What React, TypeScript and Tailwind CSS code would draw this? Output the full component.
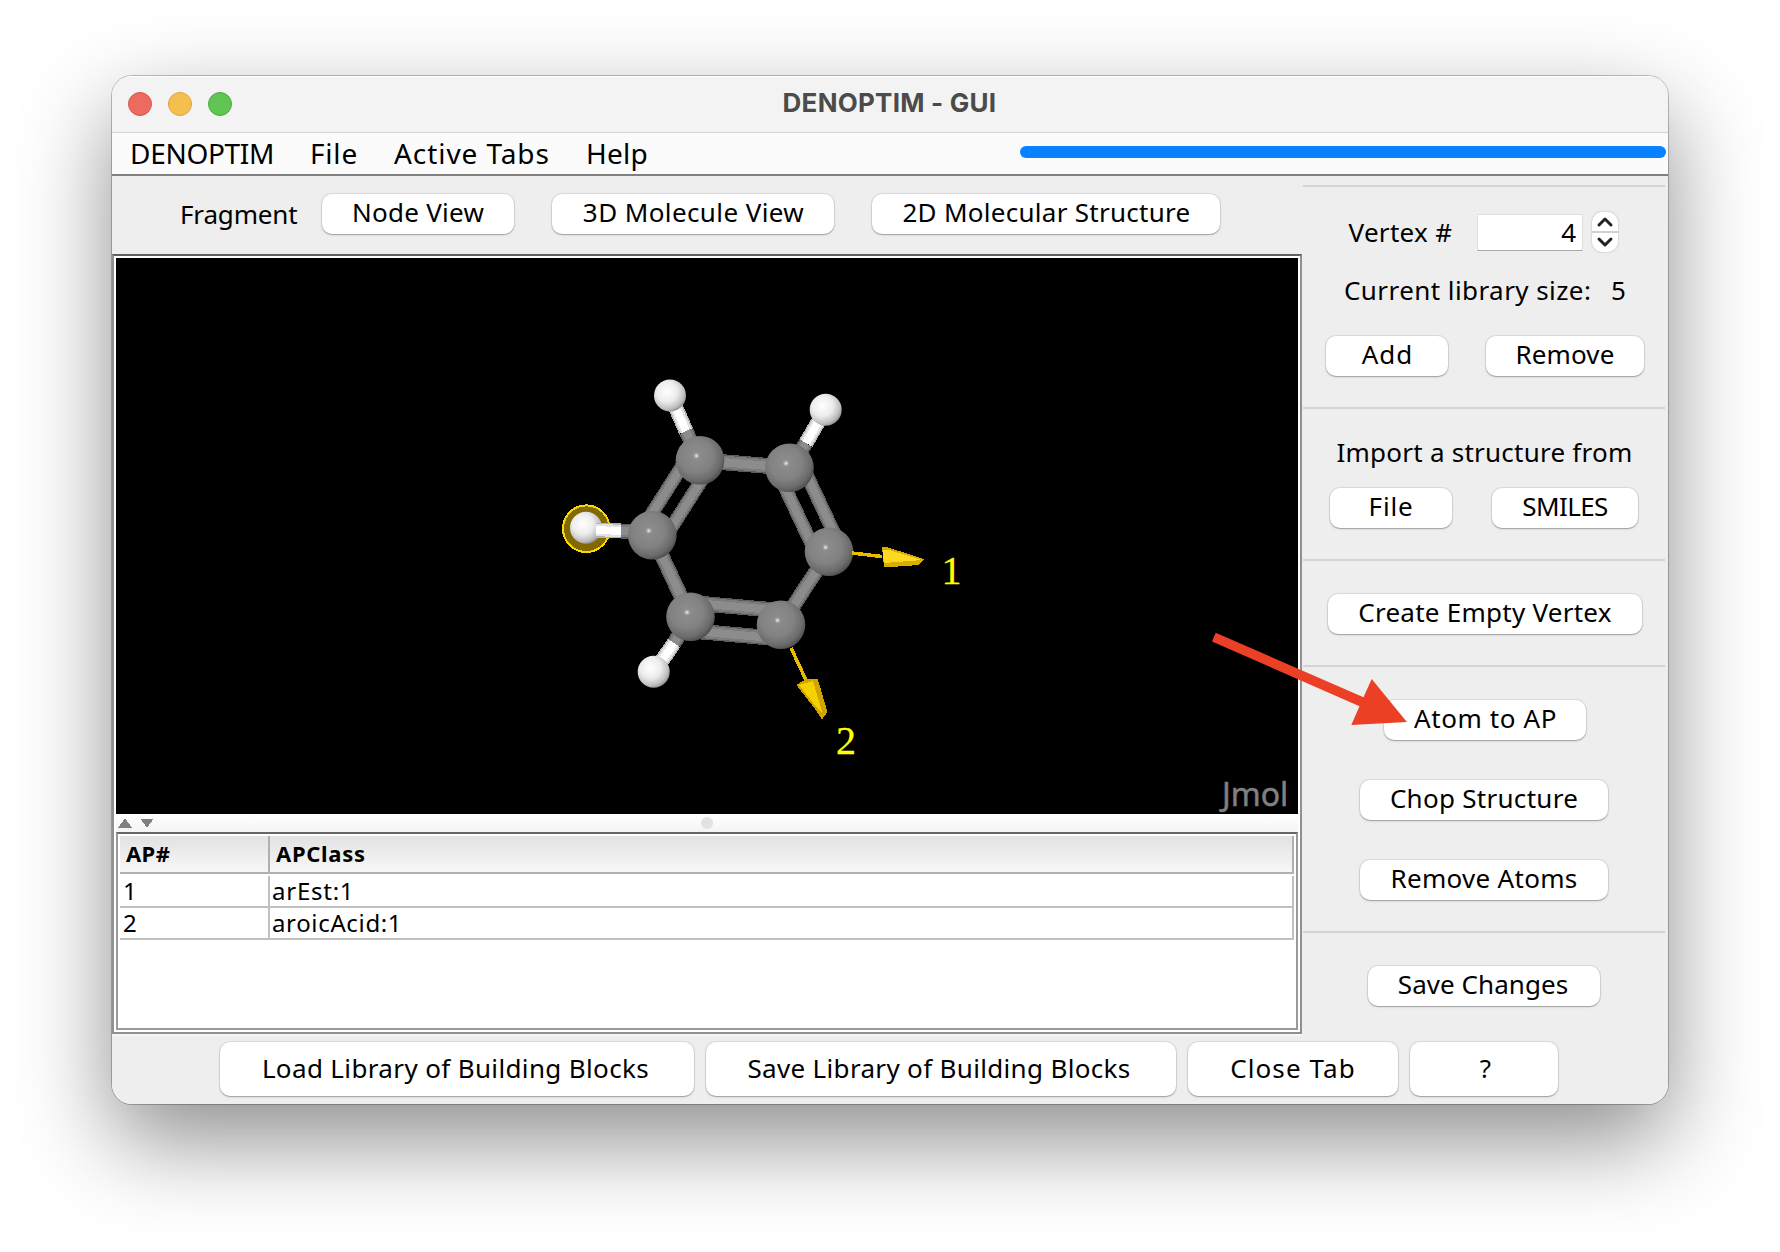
import React from 'react';

type ButtonProps = { label: string; className: string };

function Button({ label, className }: ButtonProps) {
  return (
    <button
      className={`flex shrink-0 items-center justify-center rounded-[10px] bg-white whitespace-nowrap shadow-[0_0_0_1px_rgba(0,0,0,0.07),0_1px_1px_rgba(0,0,0,0.2),0_1px_3px_rgba(0,0,0,0.1)] ${className}`}
    >
      {label}
    </button>
  );
}

function Separator() {
  return <div className="mr-[3px] ml-px h-0.5 shrink-0 bg-[#d4d4d4]" />;
}

type Point = [number, number];

const carbons: Point[] = [
  [700, 460.3],
  [789.5, 467.7],
  [829, 551.7],
  [781, 624.7],
  [690.5, 616.7],
  [652.3, 535.3],
];

const greyTones = ['#5c5c5c', '#7c7c7c', '#8c8c8c'];
const whiteTones = ['#b4b4b4', '#e2e2e2', '#ffffff'];

function Rod({ from, to, width, tones }: { from: Point; to: Point; width: number; tones: string[] }) {
  return (
    <g shapeRendering="crispEdges">
      {[1, 0.82, 0.52].map((k, i) => (
        <line key={i} x1={from[0]} y1={from[1]} x2={to[0]} y2={to[1]} stroke={tones[i]} strokeWidth={width * k} />
      ))}
    </g>
  );
}

function DoubleRod({ from, to, gap, width }: { from: Point; to: Point; gap: number; width: number }) {
  const dx = to[0] - from[0];
  const dy = to[1] - from[1];
  const n = Math.hypot(dx, dy);
  const ox = (-dy / n) * gap;
  const oy = (dx / n) * gap;
  return (
    <>
      <Rod from={[from[0] + ox, from[1] + oy]} to={[to[0] + ox, to[1] + oy]} width={width} tones={greyTones} />
      <Rod from={[from[0] - ox, from[1] - oy]} to={[to[0] - ox, to[1] - oy]} width={width} tones={greyTones} />
    </>
  );
}

function HydrogenBond({ carbon, mid, hydrogen }: { carbon: Point; mid: Point; hydrogen: Point }) {
  return (
    <>
      <Rod from={carbon} to={mid} width={15} tones={greyTones} />
      <Rod from={mid} to={hydrogen} width={15} tones={whiteTones} />
    </>
  );
}

function Hydrogen({ at, r = 16 }: { at: Point; r?: number }) {
  return <circle cx={at[0]} cy={at[1]} r={r} fill="url(#hydrogen)" />;
}

function Molecule() {
  const [c1, c2, c3, c4, c5, c6] = carbons;
  return (
    <svg viewBox="116 258 1182 556" className="block h-[556px] w-[1182px] shrink-0 bg-black">
      <defs>
        <radialGradient id="carbon" cx="0.42" cy="0.4" r="0.62">
          <stop offset="0" stopColor="#8e8e8e" />
          <stop offset="0.55" stopColor="#828282" />
          <stop offset="0.85" stopColor="#6a6a6a" />
          <stop offset="1" stopColor="#4e4e4e" />
        </radialGradient>
        <radialGradient id="hydrogen" cx="0.4" cy="0.38" r="0.65">
          <stop offset="0" stopColor="#ffffff" />
          <stop offset="0.5" stopColor="#ececec" />
          <stop offset="0.85" stopColor="#bdbdbd" />
          <stop offset="1" stopColor="#8e8e8e" />
        </radialGradient>
      </defs>

      <circle cx="586.3" cy="528.7" r="23.3" fill="#806a00" stroke="#ffd700" strokeWidth="2" shapeRendering="crispEdges" />

      <HydrogenBond carbon={c1} mid={[686, 431]} hydrogen={[672, 399]} />
      <HydrogenBond carbon={c2} mid={[806, 443]} hydrogen={[824, 412]} />
      <HydrogenBond carbon={c5} mid={[674, 643]} hydrogen={[657, 668]} />
      <Hydrogen at={[670, 395.5]} />
      <Hydrogen at={[825.7, 409.7]} />
      <Hydrogen at={[653.7, 671.7]} />

      <Rod from={c1} to={c2} width={16} tones={greyTones} />
      <Rod from={c6} to={c5} width={15} tones={greyTones} />
      <Rod from={c3} to={c4} width={15} tones={greyTones} />
      <DoubleRod from={c1} to={c6} gap={12} width={14} />
      <DoubleRod from={c2} to={c3} gap={12.5} width={14} />
      <DoubleRod from={c5} to={c4} gap={14} width={15.5} />

      <Hydrogen at={[586, 527.7]} />
      <HydrogenBond carbon={[651.7, 532.5]} mid={[621, 531]} hydrogen={[596, 530]} />

      {carbons.map(([x, y]) => (
        <g key={x}>
          <circle cx={x} cy={y} r="24.3" fill="url(#carbon)" />
          <circle cx={x - 3.5} cy={y - 4.5} r="3" fill="#a0a0a0" />
          <circle cx={x - 3.5} cy={y - 4.5} r="1.5" fill="#d8d8d8" />
        </g>
      ))}

      <g shapeRendering="crispEdges">
        <line x1="852" y1="553" x2="882" y2="556.5" stroke="#e6bb00" strokeWidth="3.5" />
        <polygon points="882,546.5 888,547.5 924,559 919,565 884,567.5" fill="#d8ae00" />
        <polygon points="882.5,550 889,550 922,560 884,563" fill="#ffd920" />
        <line x1="791" y1="648" x2="806" y2="680" stroke="#e6bb00" strokeWidth="3.5" />
        <polygon points="796.5,685 806,679 817.7,679 827.5,712 822,719.5 815,709" fill="#cfa600" />
        <polygon points="799,685 813,681 822,712 817,708" fill="#f7d000" />
      </g>

      <g className="font-['Liberation_Serif']" fontSize="40" fill="#ffff00" stroke="#ffff00" strokeWidth="0.3">
        <text x="941.5" y="583.7">1</text>
        <text x="836" y="753.5">2</text>
      </g>
      <text x="1222" y="805.5" fontSize="32" fill="#808080" stroke="#808080" strokeWidth="0.5" className="font-['Noto_Sans']">
        Jmol
      </text>
    </svg>
  );
}

function Divider() {
  return (
    <div className="flex h-[18px] shrink-0 items-center bg-gradient-to-b from-white to-[#f4f4f4] pl-0.5">
      <svg viewBox="0 0 36 10" className="h-2.5 w-9 fill-[#808080]" shapeRendering="crispEdges">
        <path d="M7 0.5 L14 9.5 H0 Z M22 0.5 H36 L29 9.5 Z" />
      </svg>
      <div className="ml-[547px] size-3 rounded-full bg-[#e2e2e2]" />
    </div>
  );
}

function Table() {
  return (
    <div className="flex h-[198px] flex-col border-2 border-t-[#666] border-r-[#999] border-b-[#999] border-l-[#999] bg-white px-0.5 pt-0.5">
      <div className="flex h-[38px] w-[1174px] shrink-0 border-r-2 border-b-2 border-[#b0b0b0] bg-gradient-to-b from-[#e2e2e2] to-[#f7f7f7] text-[22px] leading-[34px] font-bold">
        <div className="w-[150px] border-r-2 border-[#b0b0b0] pl-1.5 tracking-[0.4px]">AP#</div>
        <div className="pl-1.5 tracking-[0.7px]">APClass</div>
      </div>
      <div className="w-[1174px] text-2xl">
        <div className="flex h-[34px] border-b-2 border-[#c0c0c0] pt-0.5 leading-[29px]">
          <div className="w-[150px] border-r-2 border-[#c0c0c0] pl-[3px]">1</div>
          <div className="flex-1 border-r-2 border-[#c0c0c0] pl-0.5 tracking-[0.75px]">arEst:1</div>
        </div>
        <div className="flex h-8 border-b-2 border-[#c0c0c0] leading-[30px]">
          <div className="w-[150px] border-r-2 border-[#c0c0c0] pl-[3px]">2</div>
          <div className="flex-1 border-r-2 border-[#c0c0c0] pl-0.5 tracking-[0.65px]">aroicAcid:1</div>
        </div>
      </div>
    </div>
  );
}

function Sidebar() {
  return (
    <aside className="flex w-[366px] flex-col pt-[9px]">
      <Separator />
      <section className="flex h-[220px] flex-col pt-[25px]">
        <div className="flex h-10 items-center">
          <span className="ml-[46.5px] w-[128.5px] tracking-[0.3px]">Vertex #</span>
          <span className="h-[37px] w-[106px] border border-[#e0e0e0] border-b-[#a8a8a8] bg-white pr-1.5 text-right leading-[34px]">
            4
          </span>
          <span className="ml-[9px] flex h-10 w-[26px] flex-col items-center overflow-hidden rounded-[10px] bg-white shadow-[0_0_2px_rgba(0,0,0,0.3)]">
            <svg viewBox="0 0 26 40" className="h-10 w-[26px] fill-none stroke-[#222]" strokeWidth="3">
              <path d="M0 20 H26" stroke="#d0d0d0" strokeWidth="2" />
              <path d="M7 13 L13 7 L19 13 M7 27 L13 33 L19 27" strokeLinecap="round" strokeLinejoin="round" />
            </svg>
          </span>
        </div>
        <div className="mt-5 ml-[42px] flex h-9 leading-9">
          <span className="w-[267px] tracking-[0.43px]">Current library size:</span>
          <span>5</span>
        </div>
        <div className="mt-7 ml-6 flex gap-[38px]">
          <Button label="Add" className="h-10 w-[122px] pb-1 pl-px tracking-[1px]" />
          <Button label="Remove" className="h-10 w-[158px] pb-1 tracking-[0.1px]" />
        </div>
      </section>
      <Separator />
      <section className="h-[150px] pt-[25px]">
        <div className="ml-[34.5px] h-9 leading-9 tracking-[0.24px]">Import a structure from</div>
        <div className="mt-[18px] ml-7 flex gap-10">
          <Button label="File" className="h-10 w-[122px] pb-1 tracking-[0.8px]" />
          <Button label="SMILES" className="h-10 w-[146px] pb-1 tracking-[-0.6px]" />
        </div>
      </section>
      <Separator />
      <section className="h-[104px] pt-[33px] pl-[26px]">
        <Button label="Create Empty Vertex" className="h-10 w-[314px] pb-1 tracking-[0.25px]" />
      </section>
      <Separator />
      <section className="flex h-[264px] flex-col items-center gap-10 pt-[33px] pr-0.5">
        <Button label="Atom to AP" className="ml-0.5 h-10 w-[202px] pb-1 pl-px tracking-[0.6px]" />
        <Button label="Chop Structure" className="h-10 w-[248px] pb-1 tracking-[0.28px]" />
        <Button label="Remove Atoms" className="h-10 w-[248px] pb-1 tracking-[0.3px]" />
      </section>
      <Separator />
      <section className="flex flex-col items-center pt-[33px] pr-0.5">
        <Button label="Save Changes" className="h-10 w-[232px] pr-0.5 pb-1 tracking-[0.05px]" />
      </section>
    </aside>
  );
}

export default function App() {
  return (
    <div className="h-[1252px] w-[1780px] overflow-hidden bg-white pt-[76px] pl-[112px] font-['Noto_Sans',sans-serif] text-[26px] text-black">
      <div className="relative h-[1028px] w-[1556px] rounded-[20px] shadow-[0_0_0_1px_rgba(0,0,0,0.24),0_36px_92px_rgba(0,0,0,0.45)]">
        <div className="flex h-full flex-col overflow-hidden rounded-[20px] bg-[#eeeeee]">
          <header className="relative flex h-[57px] shrink-0 items-center justify-center border-t border-b border-t-white border-b-[#d4d4d4] bg-[#f3f3f3] pr-px pb-[5px] font-['Inter'] font-bold tracking-[0.24px] text-[#4b4b4b]">
            <div className="absolute top-[15px] left-4 flex gap-4">
              <span className="size-6 rounded-full border border-[#d5564b] bg-[#ec6a5e]" />
              <span className="size-6 rounded-full border border-[#dca33c] bg-[#f5bf4f]" />
              <span className="size-6 rounded-full border border-[#4fa73f] bg-[#61c554]" />
            </div>
            DENOPTIM - GUI
          </header>

          <nav className="flex h-[43px] shrink-0 border-b-2 border-[#808080] bg-[#fbfbfb] pl-[18px] text-[28px] leading-10">
            <span className="w-[180px] tracking-[-0.3px]">DENOPTIM</span>
            <span className="w-[84px] tracking-[0.8px]">File</span>
            <span className="w-[192px] tracking-[0.93px] whitespace-nowrap">Active Tabs</span>
            <span className="tracking-[0.25px]">Help</span>
            <div className="mt-[13px] mr-0.5 ml-auto h-3 w-[646px] rounded-full bg-[#0a82ff]" />
          </nav>

          <div className="flex h-[860px] shrink-0">
            <main className="flex w-[1190px] shrink-0 flex-col">
              <div className="flex h-[78px] shrink-0 pt-[18px] pl-[68px]">
                <span className="w-[142px] leading-[41px] tracking-[-0.15px]">Fragment</span>
                <Button label="Node View" className="h-10 w-[192px] pb-1 tracking-[0.27px]" />
                <Button label="3D Molecule View" className="ml-[38px] h-10 w-[282px] pb-1 pl-px tracking-[0.4px]" />
                <Button label="2D Molecular Structure" className="ml-[38px] h-10 w-[348px] pb-1 pl-px tracking-[0.28px]" />
              </div>
              <div className="h-[780px] shrink-0 border-2 border-t-[#606060] border-r-[#909090] border-b-[#909090] border-l-[#909090]">
                <div className="flex h-full flex-col border-2 border-white">
                  <Molecule />
                  <Divider />
                  <Table />
                </div>
              </div>
              <div className="h-0.5 shrink-0 bg-[#f6f6f6]" />
            </main>
            <Sidebar />
          </div>

          <footer className="flex h-[68px] shrink-0 gap-3 pt-1.5 pl-[108px]">
            <Button label="Load Library of Building Blocks" className="h-[54px] w-[474px] pr-[3px] pb-0.5 tracking-[0.36px]" />
            <Button label="Save Library of Building Blocks" className="h-[54px] w-[470px] pr-1 pb-0.5 tracking-[0.33px]" />
            <Button label="Close Tab" className="h-[54px] w-[210px] pb-0.5 tracking-[1.1px]" />
            <Button label="?" className="h-[54px] w-[148px] pb-0.5 pl-[3px]" />
          </footer>
        </div>

        <svg viewBox="1212 632 196 94" className="absolute top-[556px] left-[1100px] h-[94px] w-[196px]">
          <polygon
            points="1215.7,632.7 1363.5,697.3 1371.7,679 1406.9,722 1351.3,725 1359.5,706.3 1212,641.5"
            fill="#eb4025"
          />
        </svg>
      </div>
    </div>
  );
}
